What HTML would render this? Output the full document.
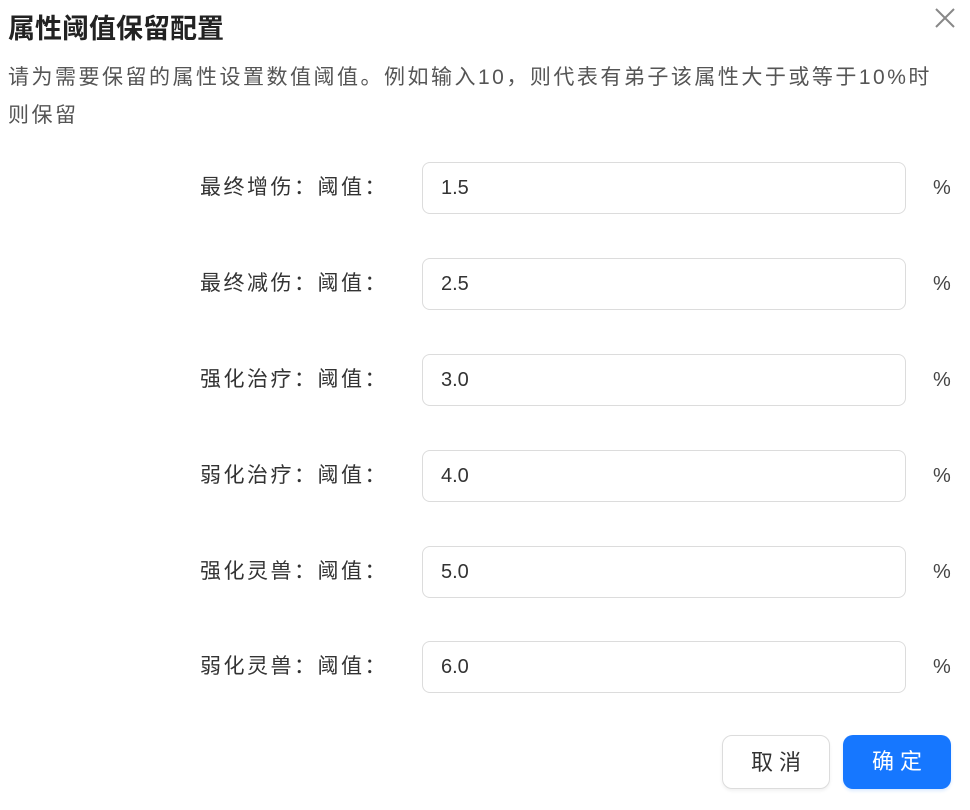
<!DOCTYPE html>
<html><head><meta charset="utf-8"><style>
body{margin:0;width:970px;height:810px;background:#fff;font-family:"Liberation Sans","Noto Sans CJK SC",sans-serif;position:relative;overflow:hidden}
.t{position:absolute;left:8px;top:7px;font-size:27px;font-weight:bold;color:#222}
.x{position:absolute;left:933px;top:6px;width:24px;height:24px}
.d{position:absolute;left:8px;top:59px;width:938px;font-size:21px;line-height:38px;color:#555;letter-spacing:2.5px}
.l{position:absolute;right:582px;font-size:21px;color:#333;line-height:52px;letter-spacing:2.5px}
.i{position:absolute;left:422px;height:50px;border:1px solid #dcdcdc;border-radius:8px;font-size:20px;color:#333;line-height:50px;padding-left:18px;width:464px}
.p{position:absolute;left:933px;font-size:20px;color:#444;line-height:52px}
.b{position:absolute;top:735px;width:108px;height:54px;border-radius:10px;font-size:22px;text-align:center;line-height:54px;letter-spacing:6px;text-indent:6px;box-sizing:border-box}
</style></head><body>
<div class="t">属性阈值保留配置</div>
<svg class="x" viewBox="0 0 24 24"><path d="M3 3L21 21M21 3L3 21" stroke="#888" stroke-width="2"/></svg>
<div class="d">请为需要保留的属性设置数值阈值。例如输入10，则代表有弟子该属性大于或等于10%时则保留</div>
<div class="l" style="top:162px">最终增伤：阈值：</div><div class="i" style="top:162px">1.5</div><div class="p" style="top:162px">%</div>
<div class="l" style="top:258px">最终减伤：阈值：</div><div class="i" style="top:258px">2.5</div><div class="p" style="top:258px">%</div>
<div class="l" style="top:354px">强化治疗：阈值：</div><div class="i" style="top:354px">3.0</div><div class="p" style="top:354px">%</div>
<div class="l" style="top:450px">弱化治疗：阈值：</div><div class="i" style="top:450px">4.0</div><div class="p" style="top:450px">%</div>
<div class="l" style="top:546px">强化灵兽：阈值：</div><div class="i" style="top:546px">5.0</div><div class="p" style="top:546px">%</div>
<div class="l" style="top:641px">弱化灵兽：阈值：</div><div class="i" style="top:641px">6.0</div><div class="p" style="top:641px">%</div>
<div class="b" style="left:722px;border:1px solid #dcdcdc;color:#333;box-shadow:0 2px 3px rgba(0,0,0,0.06)">取消</div>
<div class="b" style="left:843px;background:#1677ff;color:#fff;box-shadow:0 2px 3px rgba(22,119,255,0.15)">确定</div>
</body></html>
